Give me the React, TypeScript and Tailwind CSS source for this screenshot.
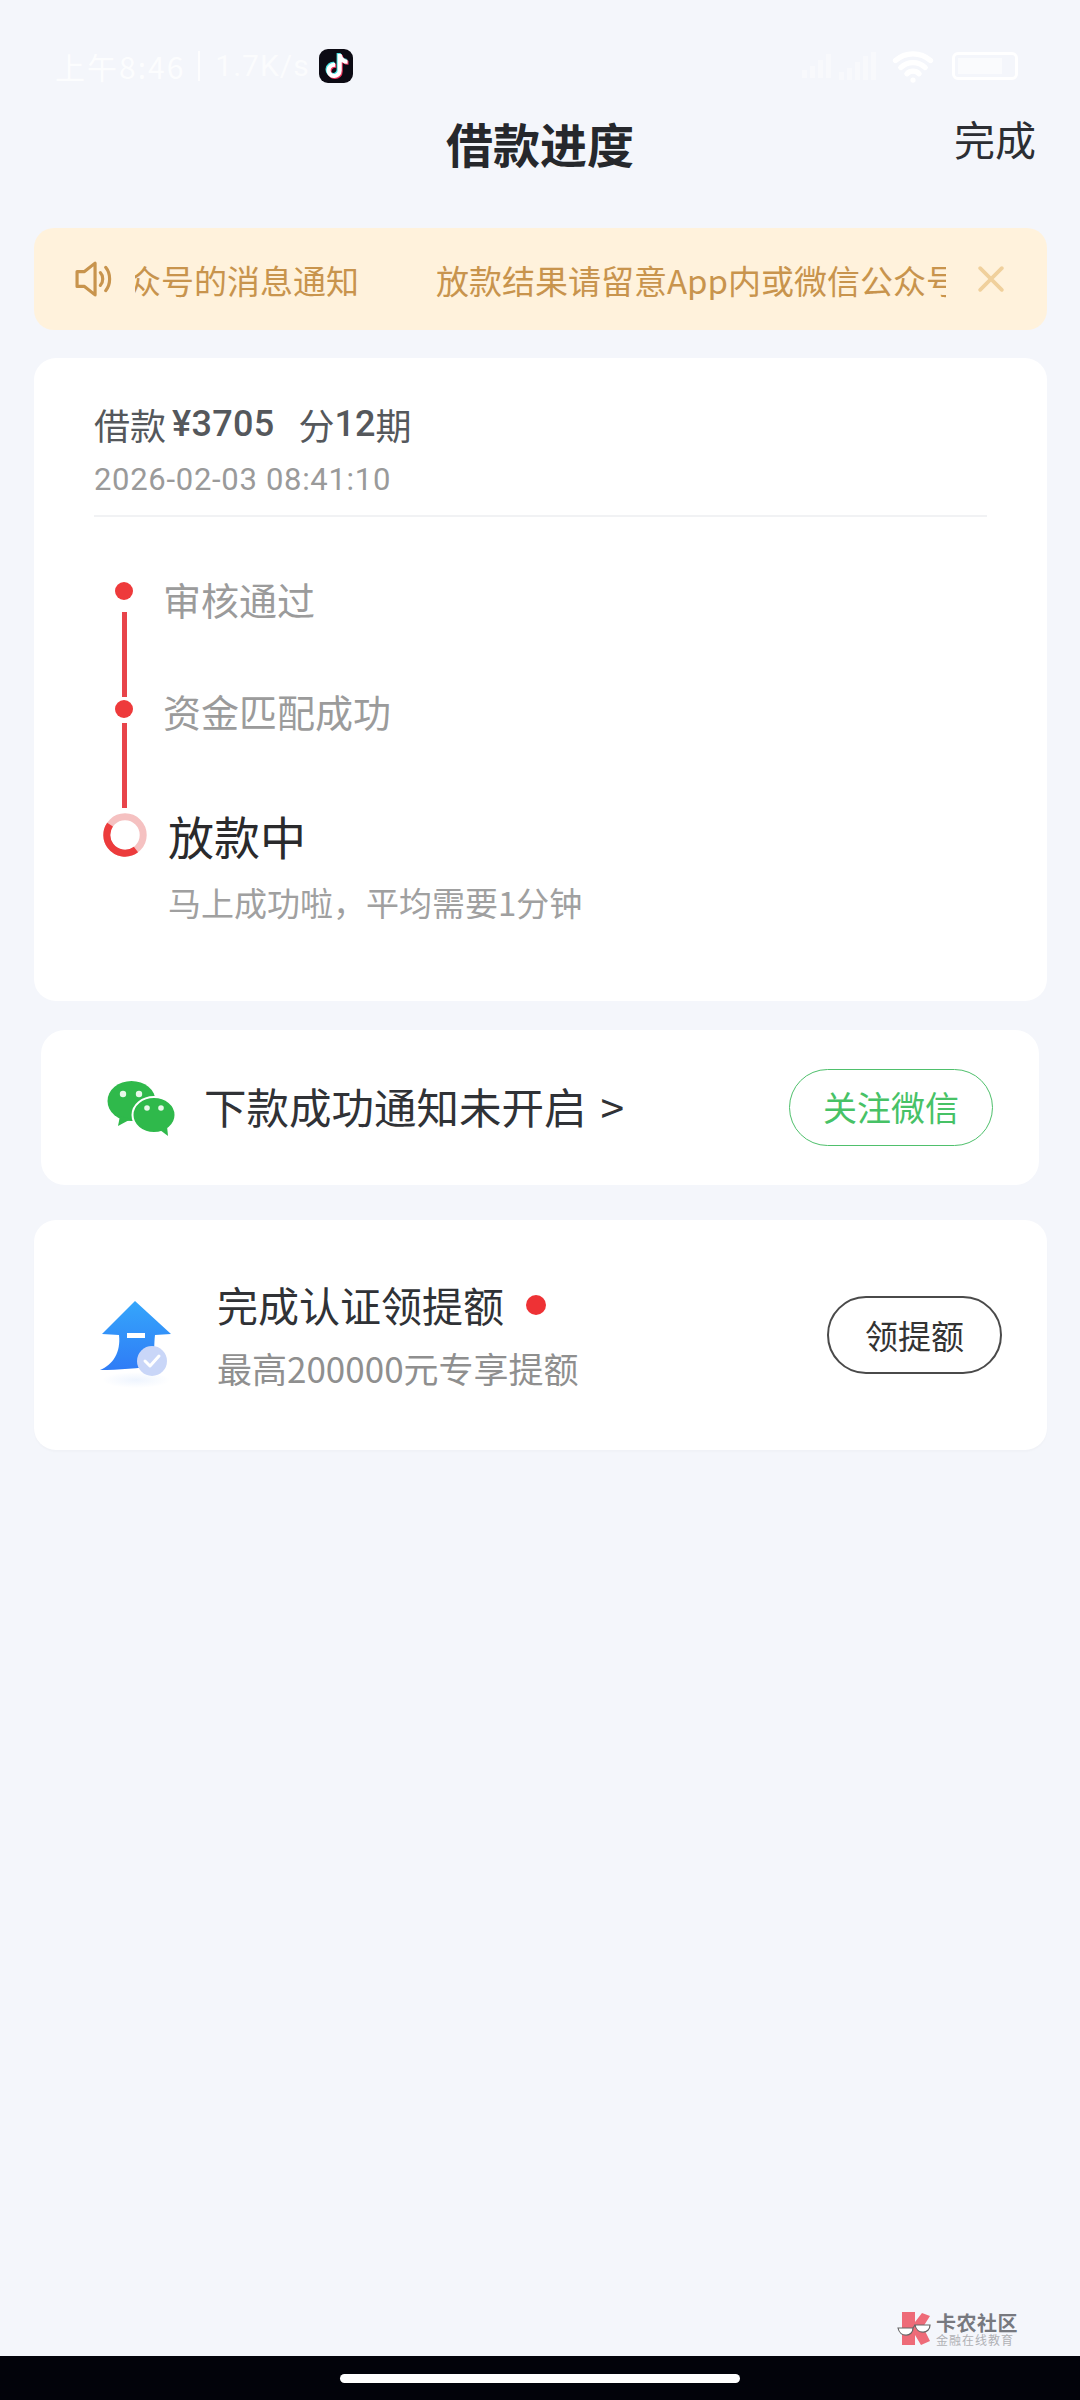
import { FaTiktok } from "react-icons/fa6";
import { Wifi } from "lucide-react";

const CJK = "font-['Noto_Sans_CJK_SC','Noto_Sans',sans-serif]";

function WeChatIcon() {
  return (
    <svg viewBox="0 0 70 56" className="h-[56px] w-[70px] shrink-0">
      <ellipse cx="25.5" cy="21" rx="24" ry="20" fill="#2fb94b" />
      <path d="M14 36 L12 46 L25 39 Z" fill="#2fb94b" />
      <circle cx="17" cy="14" r="3.2" fill="#e8f8ea" />
      <circle cx="33" cy="14" r="3.2" fill="#e8f8ea" />
      <ellipse cx="48" cy="35" rx="21.5" ry="18" fill="#2fb94b" stroke="#ffffff" strokeWidth="2" />
      <path d="M54 50 L62 56 L61 46 Z" fill="#2fb94b" />
      <circle cx="41" cy="28" r="2.8" fill="#e8f8ea" />
      <circle cx="55" cy="28" r="2.8" fill="#e8f8ea" />
    </svg>
  );
}

function QuotaArrow() {
  return (
    <svg viewBox="0 0 76 90" className="h-[90px] w-[76px] shrink-0">
      <defs>
        <linearGradient id="quota" x1="0" y1="0" x2="0" y2="1">
          <stop offset="0" stopColor="#35a6fb" />
          <stop offset="1" stopColor="#2f7cf6" />
        </linearGradient>
        <radialGradient id="quotaShade">
          <stop offset="0" stopColor="#2f7cf6" stopOpacity="0.08" />
          <stop offset="1" stopColor="#2f7cf6" stopOpacity="0" />
        </radialGradient>
      </defs>
      <ellipse cx="36" cy="80" rx="34" ry="8" fill="url(#quotaShade)" />
      <path
        d="M35 1 L71 34 L55 35 C54 44 54 52 55 66 C40 68 18 70 0 70 C13 65 21 52 19 35 L2 34 Z"
        fill="url(#quota)"
      />
      <rect x="27" y="33" width="18" height="5" fill="#ffffff" />
      <circle cx="52" cy="61" r="15" fill="#c9d6f8" />
      <path d="M45 61 L50 66 L59 56" fill="none" stroke="#ffffff" strokeWidth="3" strokeLinecap="round" strokeLinejoin="round" />
    </svg>
  );
}

function LoadingRing() {
  return (
    <svg viewBox="0 0 44 44" className="h-[44px] w-[44px] translate-x-[1px]">
      <circle cx="22" cy="22" r="18.2" fill="none" stroke="#f5c1c1" strokeWidth="7" />
      <circle
        cx="22"
        cy="22"
        r="18.2"
        fill="none"
        stroke="#ec3b3c"
        strokeWidth="7"
        strokeDasharray="51 64"
        transform="rotate(53 22 22)"
      />
    </svg>
  );
}

function ForumLogo() {
  return (
    <svg viewBox="0 0 36 36" className="h-[36px] w-[36px] shrink-0">
      <path d="M5 1 L18 1 L18 11 L25 2 L33 5 L26 16 L33 30 L24 34 L18 24 L18 34 L5 34 Z" fill="#ee6b78" />
      <path d="M1 17 H16 C16 26 3 27 1 17 Z" fill="#ffffff" stroke="#666666" strokeWidth="1.2" />
      <path d="M18 14 H33 C33 23 20 24 18 14 Z" fill="#ffffff" stroke="#666666" strokeWidth="1.2" />
      <path d="M16 17 L18 14" stroke="#666666" strokeWidth="1.2" />
    </svg>
  );
}

function StatusBar() {
  return (
    <div className="flex h-[90px] items-center justify-between pl-[55px] pr-[62px] pt-[42px] text-white">
      <div className="flex items-center text-[30px] leading-none font-['Roboto',sans-serif]">
        <span className={`${CJK} tracking-[2px] opacity-80`}>上午8:46</span>
        <span className="ml-[13px] mr-[15px] h-[30px] w-[2px] bg-white opacity-80" />
        <span className="tracking-[1px] opacity-70">1.7K/s</span>
        <span className="ml-[9px] flex h-[34px] w-[34px] items-center justify-center rounded-[9px] bg-[#0c0b14]">
          <span className="relative block h-[24px] w-[22px]">
            <FaTiktok className="absolute left-[-1px] top-[-1px] text-[24px] text-[#49e4e4]" />
            <FaTiktok className="absolute left-[1px] top-[1px] text-[24px] text-[#f0365e]" />
            <FaTiktok className="absolute left-0 top-0 text-[24px] text-white" />
          </span>
        </span>
      </div>
      <div className="flex items-center gap-[8px]">
        <div className="flex items-end gap-[3px] opacity-40">
          {[8, 12, 18, 24].map((h) => (
            <span key={h} className="w-[5px] bg-white" style={{ height: h }} />
          ))}
        </div>
        <div className="mr-[8px] flex items-end gap-[3px] opacity-40">
          {[8, 12, 18, 24, 28].map((h) => (
            <span key={h} className="w-[5px] bg-white" style={{ height: h }} />
          ))}
        </div>
        <Wifi className="h-[42px] w-[42px] text-white" strokeWidth={3} />
        <div className="ml-[10px] flex h-[28px] w-[66px] items-center rounded-[6px] border-[3px] border-white p-[3px]">
          <span className="h-full w-[44px] bg-white opacity-50" />
        </div>
      </div>
    </div>
  );
}

export default function App() {
  return (
    <div className={`relative flex h-[2400px] w-[1080px] flex-col overflow-hidden bg-[#f4f6fb] ${CJK}`}>
      <StatusBar />

      <header className="relative flex h-[104px] items-center justify-center">
        <h1 className="text-[47px] font-bold leading-none text-[#26282c]">借款进度</h1>
        <span className="absolute right-[44px] top-[28px] text-[41px] leading-none text-[#2c2e33]">完成</span>
      </header>

      <div className="ml-[34px] mr-[33px] mt-[34px] flex h-[102px] items-center rounded-[20px] bg-[#fff2dc] pl-[40px] pr-[43px]">
        <svg viewBox="0 0 36 34" className="h-[36px] w-[40px] shrink-0" fill="none" stroke="#c8944d" strokeWidth="3">
          <path d="M2 10 H9 L19 2 V32 L9 24 H2 Z" strokeLinejoin="round" />
          <path d="M24 11 C27 14 27 20 24 23" strokeLinecap="round" />
          <path d="M29 6 C34 12 34 22 29 28" strokeLinecap="round" />
        </svg>
        <div className="ml-[21px] flex min-w-0 flex-1 items-center overflow-hidden whitespace-nowrap pt-[2px] text-[33px] leading-[40px] text-[#c8944d]">
          <div className="flex w-[224px] shrink-0 justify-end overflow-hidden">
            <span className="shrink-0">放款结果请留意App内或微信公众号的消息通知</span>
          </div>
          <span className="ml-[77px] shrink-0">放款结果请留意App内或微信公众号的消息通知</span>
        </div>
        <svg viewBox="0 0 24 24" className="ml-[32px] h-[26px] w-[26px] shrink-0" stroke="#f0d09c" strokeWidth="3.4" strokeLinecap="round">
          <path d="M2 2 L22 22 M22 2 L2 22" />
        </svg>
      </div>

      <section className="ml-[34px] mr-[33px] mt-[28px] flex h-[643px] flex-col rounded-[22px] bg-white px-[60px]">
        <p className="mt-[45px] flex items-center text-[36px] leading-[42px] text-[#55585c]">
          <span>借款</span>
          <span className="ml-[6px] font-['Roboto',sans-serif] font-medium tracking-[0.3px]">¥3705</span>
          <span className="ml-[24px]">分</span>
          <span className="font-['Roboto',sans-serif] font-medium">12</span>
          <span>期</span>
        </p>
        <p className="mt-[17px] font-['Roboto',sans-serif] text-[31px] leading-[36px] tracking-[0.7px] text-[#9a9a9a]">2026-02-03 08:41:10</p>
        <div className="mt-[17px] h-[2px] bg-[#f1f2f4]" />

        <div className="ml-[8px] mt-[65px] flex flex-col">
          <div className="flex">
            <div className="flex w-[44px] flex-col items-center">
              <span className="h-[18px] w-[18px] rounded-full bg-[#ee3a3b]" />
              <span className="mt-[12px] h-[85px] w-[5px] bg-[#e8444a]" />
            </div>
            <span className="ml-[17px] mt-[-5px] h-[44px] text-[38px] leading-[44px] text-[#9b9b9b]">审核通过</span>
          </div>
          <div className="mt-[3px] flex">
            <div className="flex w-[44px] flex-col items-center">
              <span className="h-[18px] w-[18px] rounded-full bg-[#ee3a3b]" />
              <span className="mt-[5px] h-[85px] w-[5px] bg-[#e8444a]" />
            </div>
            <span className="ml-[17px] mt-[-11px] h-[44px] text-[38px] leading-[44px] text-[#9b9b9b]">资金匹配成功</span>
          </div>
          <div className="mt-[5px] flex">
            <div className="w-[44px]">
              <LoadingRing />
            </div>
            <div className="ml-[22px] mt-[-3px] flex flex-col">
              <span className="text-[46px] leading-[50px] text-[#2a2a2c]">放款中</span>
              <span className="mt-[22px] text-[33px] leading-[40px] text-[#a0a0a0]">马上成功啦，平均需要1分钟</span>
            </div>
          </div>
        </div>
      </section>

      <section className="mx-[41px] mt-[29px] flex h-[155px] items-center rounded-[24px] bg-white pl-[65px] pr-[46px]">
        <WeChatIcon />
        <span className="ml-[28px] flex flex-1 items-center pb-[3px] text-[42.5px] leading-none text-[#303236]">
          <span>下款成功通知未开启</span>
          <span className="ml-[14px]">&gt;</span>
        </span>
        <button className="flex h-[77px] w-[204px] items-center justify-center rounded-full border-[1.5px] border-[#4fc06c] pb-[2px] text-[34px] leading-none text-[#47c266]">
          关注微信
        </button>
      </section>

      <section className="ml-[34px] mr-[33px] mt-[35px] flex h-[230px] items-center rounded-[22px] bg-white pl-[66px] pr-[45px] shadow-[0_2px_2px_rgba(0,0,0,0.02)]">
        <div className="mt-[20px]">
          <QuotaArrow />
        </div>
        <div className="ml-[41px] flex flex-1 flex-col">
          <div className="flex items-center">
            <span className="mt-[-2px] text-[41px] leading-[48px] text-[#303236]">完成认证领提额</span>
            <span className="ml-[22px] h-[20px] w-[20px] rounded-full bg-[#ee3235]" />
          </div>
          <span className="mt-[20px] text-[35px] leading-[40px] text-[#8f8f8f]">最高200000元专享提额</span>
        </div>
        <button className="flex h-[78px] w-[175px] items-center justify-center rounded-full border-2 border-[#4a4a4a] text-[33px] leading-none text-[#333333]">
          领提额
        </button>
      </section>

      <div className="mt-auto flex justify-end pb-[9px] pr-[62px]">
        <div className="flex items-center gap-[3px]">
          <ForumLogo />
          <div className="flex flex-col gap-[1px]">
            <span className="text-[20px] font-bold leading-[20px] tracking-[0.5px] text-[#77797f]">卡农社区</span>
            <span className="text-[12px] leading-[12px] tracking-[1px] text-[#b0b1b5]">金融在线教育</span>
          </div>
        </div>
      </div>

      <div className="flex h-[44px] items-center justify-center bg-[#02030a]">
        <span className="h-[9px] w-[400px] rounded-full bg-white" />
      </div>
    </div>
  );
}
